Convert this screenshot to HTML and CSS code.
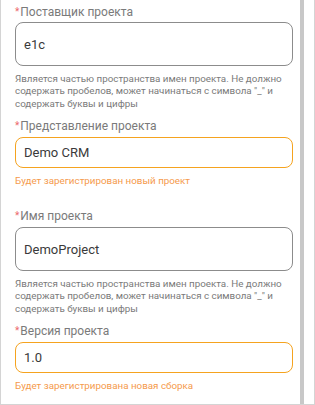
FILE: index.html
```html
<!DOCTYPE html>
<html>
<head>
    <title>Новый проект</title>
    <link rel="stylesheet" href="styles.css">
</head>
<body>
    <div class="frame">
        <div class="form">
            <div class="field">
                <div class="label"><span class="req">*</span>Поставщик проекта</div>
                <div class="input tall">e1c</div>
                <div class="hint">Является частью пространства имен проекта. Не должно содержать пробелов, может начинаться с символа "_" и содержать буквы и цифры</div>
            </div>
            <div class="field wide">
                <div class="label"><span class="req">*</span>Представление проекта</div>
                <div class="input warn">Demo CRM</div>
                <div class="hint hint-warn">Будет зарегистрирован новый проект</div>
            </div>
            <div class="field">
                <div class="label"><span class="req">*</span>Имя проекта</div>
                <div class="input tall">DemoProject</div>
                <div class="hint">Является частью пространства имен проекта. Не должно содержать пробелов, может начинаться с символа "_" и содержать буквы и цифры</div>
            </div>
            <div class="field">
                <div class="label"><span class="req">*</span>Версия проекта</div>
                <div class="input warn">1.0</div>
                <div class="hint hint-warn">Будет зарегистрирована новая сборка</div>
            </div>
        </div>
        <div class="scrollbar"></div>
        <div class="gutter"></div>
    </div>
</body>
</html>
```

FILE: styles.css
```css
body {
    margin: 0;
    font-family: Roboto, "Liberation Sans", sans-serif;
    background-color: white;
}

.frame {
    display: flex;
    width: 315px;
    height: 405px;
    box-sizing: border-box;
    border: 1px solid #d4d4d4;
    border-top: none;
    overflow: hidden;
}

.form {
    flex: 1;
    padding: 4px 7px 0 14px;
}

.scrollbar {
    width: 4px;
    background-color: #c8c8c8;
}

.gutter {
    width: 10px;
}

.field {
    margin-bottom: 8px;
}

.field.wide {
    margin-bottom: 21px;
}

.field + .field .label {
    margin-bottom: 3px;
}

.label {
    font-size: 12px;
    line-height: 16px;
    color: #7a7a7a;
    margin-bottom: 2px;
}

.req {
    color: #ec6a6a;
    font-size: 10px;
    margin-right: 1px;
    vertical-align: 1px;
}

.input {
    display: flex;
    align-items: center;
    box-sizing: border-box;
    height: 31px;
    padding: 0 8px;
    border: 1px solid #8c8c8c;
    border-radius: 8px;
    font-size: 13px;
    color: #3a3a3a;
}

.input.tall {
    height: 44px;
}

.input.warn {
    border-color: #f5a31f;
}

.hint {
    margin-top: 7px;
    font-size: 9.8px;
    line-height: 12.3px;
    color: #7a7a7a;
}

.hint-warn {
    color: #f59a4c;
}
```
